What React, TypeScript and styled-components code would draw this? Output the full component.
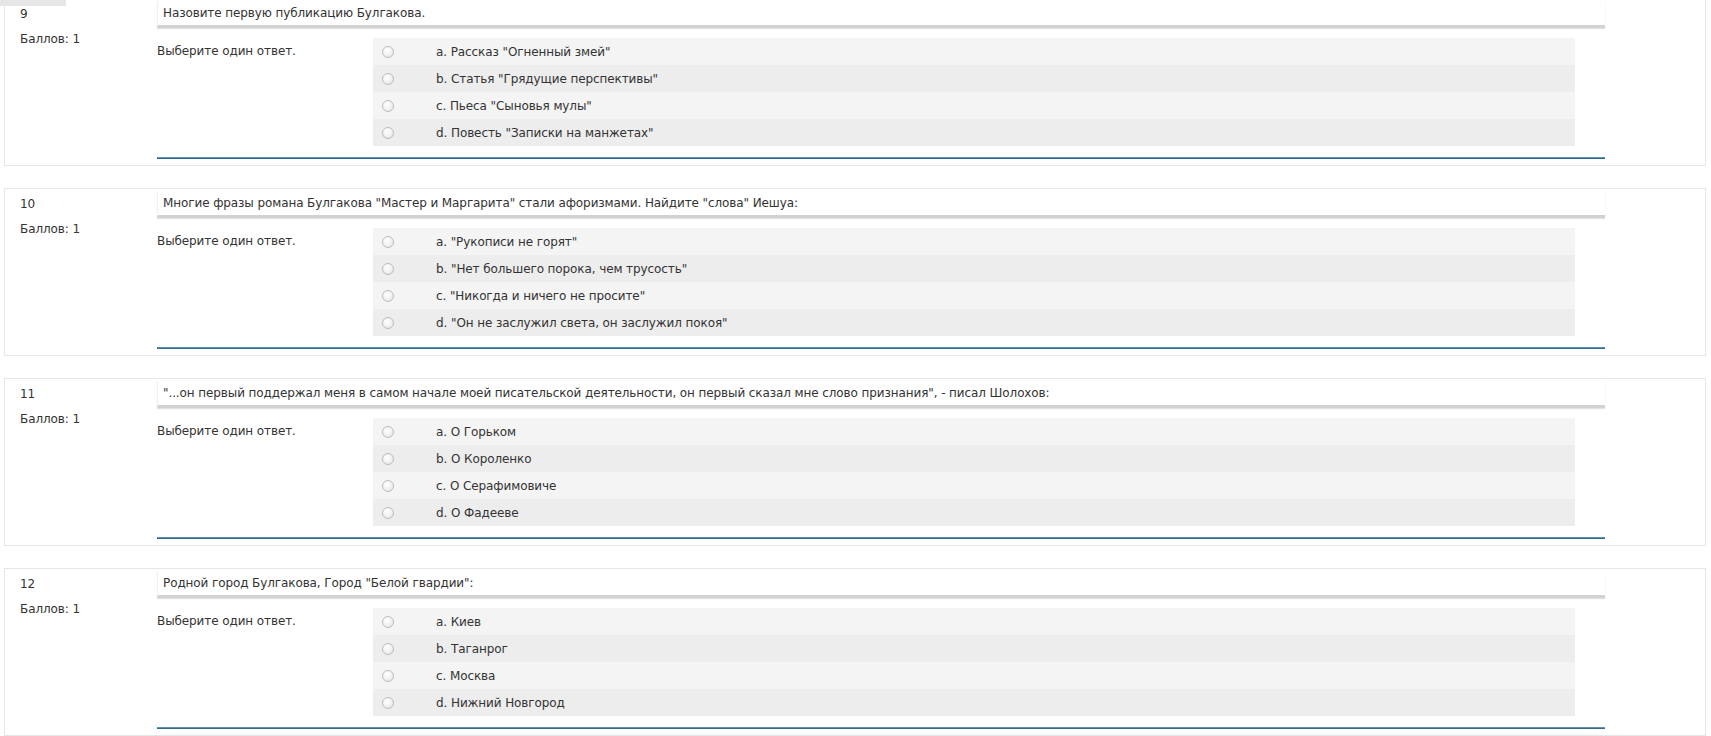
import styled, { createGlobalStyle } from "styled-components";

const GlobalStyle = createGlobalStyle`
  html, body {
    margin: 0;
    padding: 0;
    background: #ffffff;
    overflow: hidden;
  }
  body {
    font-family: "DejaVu Sans", Verdana, sans-serif;
    font-size: 12px;
    letter-spacing: -0.1px;
    color: #333333;
  }
  * {
    box-sizing: border-box;
  }
`;

type Question = {
  num: number;
  text: string;
  answers: string[];
};

const questions: Question[] = [
  {
    num: 9,
    text: "Назовите первую публикацию Булгакова.",
    answers: [
      'Рассказ "Огненный змей"',
      'Статья "Грядущие перспективы"',
      'Пьеса "Сыновья мулы"',
      'Повесть "Записки на манжетах"',
    ],
  },
  {
    num: 10,
    text: 'Многие фразы романа Булгакова "Мастер и Маргарита" стали афоризмами. Найдите "слова" Иешуа:',
    answers: [
      '"Рукописи не горят"',
      '"Нет большего порока, чем трусость"',
      '"Никогда и ничего не просите"',
      '"Он не заслужил света, он заслужил покоя"',
    ],
  },
  {
    num: 11,
    text: '"...он первый поддержал меня в самом начале моей писательской деятельности, он первый сказал мне слово признания", - писал Шолохов:',
    answers: ["О Горьком", "О Короленко", "О Серафимовиче", "О Фадееве"],
  },
  {
    num: 12,
    text: 'Родной город Булгакова, Город "Белой гвардии":',
    answers: ["Киев", "Таганрог", "Москва", "Нижний Новгород"],
  },
];

const letters = ["a", "b", "c", "d"];

const Page = styled.div`
  position: relative;
  padding: 0 4px;
  margin-top: -2px;
`;

const TopTab = styled.div`
  position: absolute;
  left: 0;
  top: 2px;
  width: 66px;
  height: 6px;
  background: #e6e6e6;
`;

const Card = styled.div`
  display: flex;
  width: 1702px;
  height: 168px;
  border: 1px solid #e6e6e6;
  margin-bottom: 22px;
  background: #fff;
`;

const Info = styled.div`
  width: 152px;
  flex: none;
  padding: 3px 0 0 15px;
  line-height: 24px;
  color: #333;
`;

const InfoLine = styled.div`
  height: 25px;
`;

const Content = styled.div`
  width: 1448px;
  flex: none;
  display: flex;
  flex-direction: column;
  padding-top: 2px;
`;

const QText = styled.div`
  height: 27px;
  line-height: 24px;
  padding-left: 5px;
  border-left: 1px solid #f0f0f0;
  border-bottom: 3px solid #d2d2d2;
  box-shadow: 0 1px 1px #e2e2e2;
  white-space: nowrap;
`;

const Ablock = styled.div`
  display: flex;
  margin-top: 10px;
`;

const Prompt = styled.div`
  width: 216px;
  flex: none;
  line-height: 27px;
`;

const Answers = styled.div`
  width: 1202px;
`;

const Row = styled.div<{ $alt: boolean }>`
  display: flex;
  align-items: center;
  height: 27px;
  background: ${(p) => (p.$alt ? "#ededed" : "#f4f4f4")};
`;

const Radio = styled.span`
  width: 12px;
  height: 12px;
  border-radius: 50%;
  border: 1px solid #bdbdbd;
  background: radial-gradient(circle at 40% 35%, #ffffff 0%, #f0f0f0 55%, #dcdcdc 100%);
  margin: 0 42px 0 9px;
  flex: none;
`;

const Label = styled.span`
  white-space: nowrap;
`;

const Rule = styled.div`
  height: 2px;
  margin-top: 11px;
  background: #2f6a8f;
  border-top: 1px solid #5f90ad;
`;

export default function App() {
  return (
    <>
      <GlobalStyle />
      <Page>
        <TopTab />
        {questions.map((q) => (
          <Card key={q.num}>
            <Info>
              <InfoLine>{q.num}</InfoLine>
              <InfoLine>Баллов: 1</InfoLine>
            </Info>
            <Content>
              <QText>{q.text}</QText>
              <Ablock>
                <Prompt>Выберите один ответ.</Prompt>
                <Answers>
                  {q.answers.map((a, i) => (
                    <Row key={a} $alt={i % 2 === 1}>
                      <Radio />
                      <Label>
                        {letters[i]}. {a}
                      </Label>
                    </Row>
                  ))}
                </Answers>
              </Ablock>
              <Rule />
            </Content>
          </Card>
        ))}
      </Page>
    </>
  );
}
